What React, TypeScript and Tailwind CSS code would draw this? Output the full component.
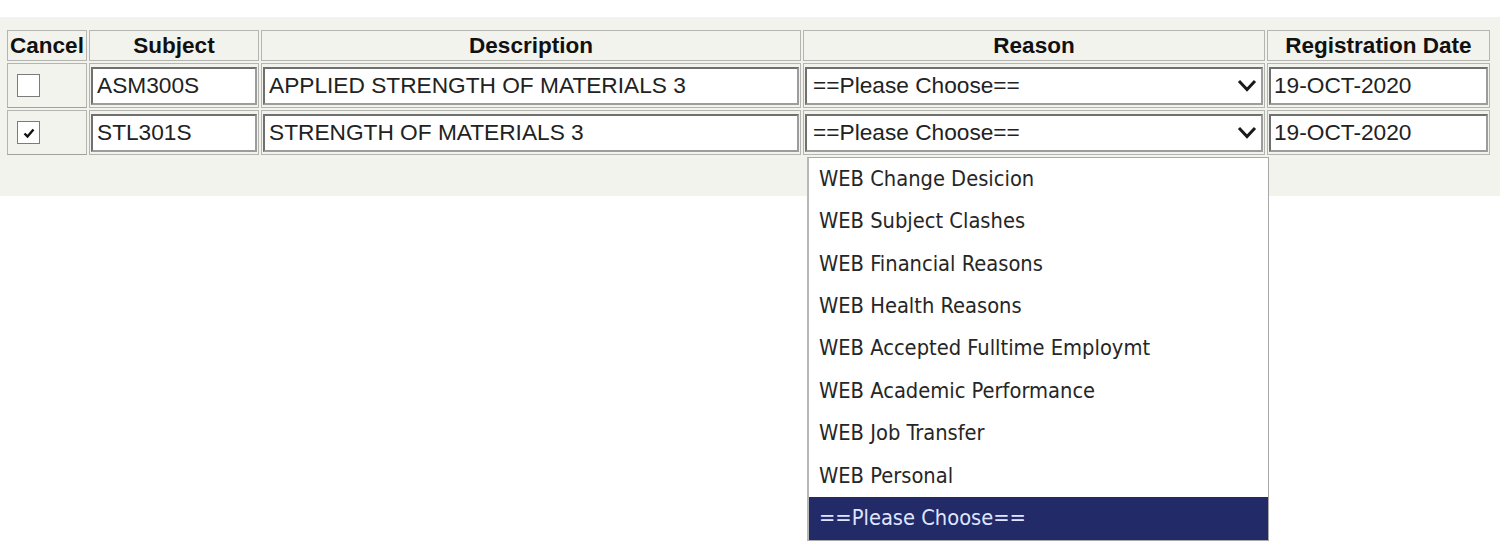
import React from 'react'

const rows = [
  { code: 'ASM300S', desc: 'APPLIED STRENGTH OF MATERIALS 3', date: '19-OCT-2020', checked: false },
  { code: 'STL301S', desc: 'STRENGTH OF MATERIALS 3', date: '19-OCT-2020', checked: true },
]

const reasons = [
  'WEB Change Desicion',
  'WEB Subject Clashes',
  'WEB Financial Reasons',
  'WEB Health Reasons',
  'WEB Accepted Fulltime Employmt',
  'WEB Academic Performance',
  'WEB Job Transfer',
  'WEB Personal',
  '==Please Choose==',
]

const cell = 'border border-[#b4b4b0] px-[1px] py-[2px] align-middle'
const head = 'border border-[#b4b4b0] h-[31px] p-0 pt-[2px] text-center font-bold text-[22.5px] leading-none text-[#111]'
const field =
  'w-full h-[38px] border-2 border-t-[#707070] border-l-[#707070] border-b-[#9c9c9c] border-r-[#9c9c9c] bg-white text-[22.7px] text-[#222] outline-none'

function Checkbox({ checked }: { checked: boolean }) {
  return (
    <div className="ml-[8px] w-[23px] h-[23px] border border-[#7c7c7c] bg-white flex items-center justify-center">
      {checked && (
        <svg width="14" height="12" viewBox="0 0 14 12">
          <path d="M2.5 6.5 L5.5 9.5 L11.5 2.5" fill="none" stroke="#111" strokeWidth="2.4" />
        </svg>
      )}
    </div>
  )
}

function Chevron() {
  return (
    <svg width="20" height="13" viewBox="0 0 20 13" className="shrink-0">
      <path d="M2 2 L10 10.5 L18 2" fill="none" stroke="#1a1a1a" strokeWidth="3" />
    </svg>
  )
}

function ReasonList() {
  return (
    <div className="absolute left-[3px] top-[calc(100%+3px)] w-[462px] z-10 bg-white border border-[#a8a8a8] border-l-2 border-l-[#b8b8b8]">
      {reasons.map((r, i) => (
        <div
          key={r}
          className={
            'h-[42.4px] flex items-center pl-[10px] text-[21.7px] ' +
            (i === reasons.length - 1 ? 'bg-[#222a68] text-[#dfe6ff]' : 'text-[#262626]')
          }
          style={{ fontFamily: '"DejaVu Sans Condensed", "DejaVu Sans", sans-serif' }}
        >
          {r}
        </div>
      ))}
    </div>
  )
}

export default function App() {
  return (
    <div className="w-[1500px] h-[544px] bg-white pt-[17px]" style={{ fontFamily: '"Liberation Sans", Arial, sans-serif' }}>
      <div className="h-[179px] bg-[#f3f3ee] pt-[11px] pl-[5px]">
        <table className="border-separate border-spacing-[2px] table-fixed">
          <colgroup>
            <col className="w-[80px]" />
            <col className="w-[170px]" />
            <col className="w-[540px]" />
            <col className="w-[462px]" />
            <col className="w-[223px]" />
          </colgroup>
          <thead>
            <tr>
              <th className={head}>Cancel</th>
              <th className={head}>Subject</th>
              <th className={head}>Description</th>
              <th className={head}>Reason</th>
              <th className={head}>Registration Date</th>
            </tr>
          </thead>
          <tbody>
            {rows.map((row, i) => (
              <tr key={row.code}>
                <td className={cell + ' h-[45px] border-b-[#a0a09c]'}>
                  <Checkbox checked={row.checked} />
                </td>
                <td className={cell}>
                  <input readOnly value={row.code} className={field + ' pl-[4px]'} />
                </td>
                <td className={cell}>
                  <input readOnly value={row.desc} className={field + ' pl-[4px]'} />
                </td>
                <td className={cell + ' relative'}>
                  <div className={field + ' flex items-center justify-between pl-[6px] pr-[4px]'}>
                    <span>==Please Choose==</span>
                    <Chevron />
                  </div>
                  {i === 1 && <ReasonList />}
                </td>
                <td className={cell}>
                  <input readOnly value={row.date} className={field + ' pl-[3px] text-[21.8px]'} />
                </td>
              </tr>
            ))}
          </tbody>
        </table>
      </div>
    </div>
  )
}
